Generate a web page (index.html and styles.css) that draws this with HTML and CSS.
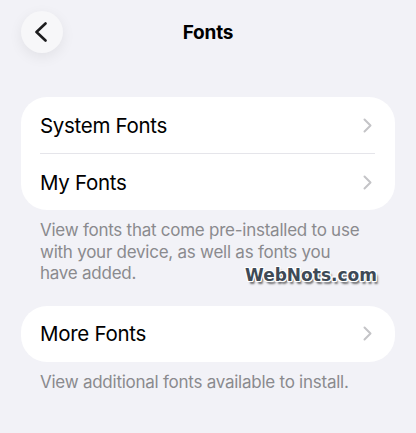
FILE: index.html
```html
<!DOCTYPE html>
<html lang="en">
<head>
<meta charset="utf-8">
<title>Fonts</title>
<link rel="stylesheet" href="styles.css">
</head>
<body>
<div class="screen">
  <header class="nav">
    <button class="back" aria-label="Back">
      <svg width="14" height="20" viewBox="0 0 14 20"><path d="M11.5 1.5 L2.5 10 L11.5 18.5" fill="none" stroke="#1c1c1e" stroke-width="2.6" stroke-linecap="round" stroke-linejoin="round"/></svg>
    </button>
    <h1 class="title">Fonts</h1>
    <span class="nav-spacer"></span>
  </header>

  <section class="group">
    <ul class="card">
      <li class="row"><span class="label">System Fonts</span><svg class="chev" width="9" height="15" viewBox="0 0 9 15"><path d="M1.5 1.5 L7.5 7.5 L1.5 13.5" fill="none" stroke="#c4c4c7" stroke-width="2" stroke-linecap="round" stroke-linejoin="round"/></svg></li>
      <li class="row"><span class="label">My Fonts</span><svg class="chev" width="9" height="15" viewBox="0 0 9 15"><path d="M1.5 1.5 L7.5 7.5 L1.5 13.5" fill="none" stroke="#c4c4c7" stroke-width="2" stroke-linecap="round" stroke-linejoin="round"/></svg></li>
    </ul>
    <p class="note">View fonts that come pre-installed to use with your device, as well as fonts you<br>have added.</p>
    <span class="mark">WebNots.com</span>
  </section>

  <section class="group">
    <ul class="card">
      <li class="row"><span class="label">More Fonts</span><svg class="chev" width="9" height="15" viewBox="0 0 9 15"><path d="M1.5 1.5 L7.5 7.5 L1.5 13.5" fill="none" stroke="#c4c4c7" stroke-width="2" stroke-linecap="round" stroke-linejoin="round"/></svg></li>
    </ul>
    <p class="note">View additional fonts available to install.</p>
  </section>
</div>
</body>
</html>
```

FILE: styles.css
```css
html, body {
  margin: 0;
  padding: 0;
  background: #f2f2f7;
}

.screen {
  width: 416px;
  height: 433px;
  box-sizing: border-box;
  padding: 11px 21px 0 21px;
  font-family: Inter, "Liberation Sans", sans-serif;
  color: #000;
}

.nav {
  display: flex;
  align-items: center;
  justify-content: space-between;
  height: 42px;
}

.back {
  width: 42px;
  height: 42px;
  border-radius: 50%;
  border: none;
  padding: 0 2px 0 0;
  background: #f7f7f9;
  box-shadow: 0 4px 14px rgba(0, 0, 0, 0.07);
  display: flex;
  align-items: center;
  justify-content: center;
}

.title {
  margin: 0;
  font-size: 19px;
  font-weight: 700;
  letter-spacing: -0.2px;
}

.nav-spacer {
  width: 42px;
}

.group {
  position: relative;
}

.nav + .group {
  margin-top: 44px;
}

.group + .group {
  margin-top: 21px;
}

.card {
  list-style: none;
  margin: 0;
  padding: 0;
  background: #fff;
  border-radius: 26px;
}

.row {
  height: 56px;
  display: flex;
  align-items: center;
  justify-content: space-between;
  padding: 0 23px 0 19px;
  box-sizing: border-box;
  position: relative;
}

.row + .row {
  height: 57px;
  border-top: 1px solid #e5e5ea;
  margin-left: 19px;
  margin-right: 20px;
  padding-left: 0;
  padding-right: 3px;
}

.label {
  font-size: 20.5px;
  letter-spacing: -0.3px;
}

.note {
  margin: 0;
  padding: 10px 14px 0 19px;
  font-size: 17px;
  line-height: 21.5px;
  color: #8a8a8e;
  letter-spacing: -0.25px;
}

.mark {
  position: absolute;
  left: 224px;
  top: 168px;
  font-family: "DejaVu Sans", sans-serif;
  font-weight: 700;
  font-size: 17px;
  color: #3e4a56;
  text-shadow:
    -1px -1px 0 #fff, 1px -1px 0 #fff, -1px 1px 0 #fff, 1px 1px 0 #fff,
    0 -1px 0 #fff, 0 1px 0 #fff, -1px 0 0 #fff, 1px 0 0 #fff,
    2px 3px 2px rgba(0, 0, 0, 0.55);
}
```
